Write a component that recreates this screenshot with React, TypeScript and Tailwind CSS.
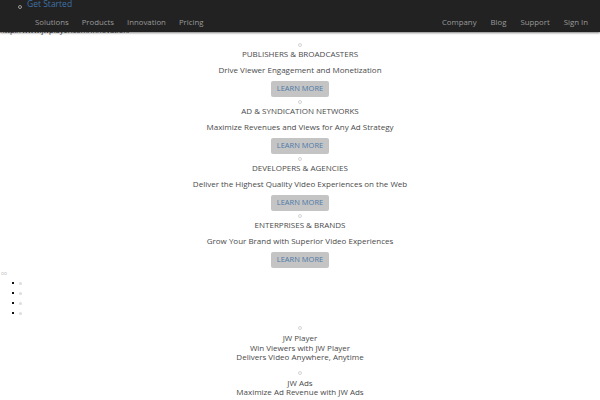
import React from 'react';

const sections = [
  { title: 'PUBLISHERS & BROADCASTERS', text: 'Drive Viewer Engagement and Monetization' },
  { title: 'AD & SYNDICATION NETWORKS', text: 'Maximize Revenues and Views for Any Ad Strategy' },
  { title: 'DEVELOPERS & AGENCIES', text: 'Deliver the Highest Quality Video Experiences on the Web' },
  { title: 'ENTERPRISES & BRANDS', text: 'Grow Your Brand with Superior Video Experiences' },
];

const products = [
  { name: 'JW Player', lines: ['Win Viewers with JW Player', 'Delivers Video Anywhere, Anytime'] },
  { name: 'JW Ads', lines: ['Maximize Ad Revenue with JW Ads', 'Monetize Every View Across Every Screen'] },
];

function Ring() {
  return <span className="block w-[4px] h-[4px] rounded-full border border-[#d4d4d4]" />;
}

export default function App() {
  return (
    <div className="w-[600px] h-[400px] overflow-hidden bg-white text-[#4a4a4a] font-['Open_Sans',sans-serif]">
      {/* Top bar */}
      <div className="relative z-10 h-[34px] bg-[#222] shadow-[0_1px_2px_rgba(0,0,0,0.5)]">
        <div className="flex items-center h-[12px] -mt-[2px] pl-[18px] gap-[5px]">
          <span className="w-[4px] h-[4px] mt-[5px] rounded-full border border-[#999]" />
          <span className="text-[8.5px] text-[#3f72a8]">Get Started</span>
        </div>
        <div className="flex justify-between items-center h-[20px] mt-[3px] pl-[35px] pr-[12px] text-[7.8px] text-[#9a9a9a]">
          <div className="flex gap-[13px]">
            <span>Solutions</span>
            <span>Products</span>
            <span>Innovation</span>
            <span>Pricing</span>
          </div>
          <div className="flex gap-[14px]">
            <span>Company</span>
            <span>Blog</span>
            <span>Support</span>
            <span>Sign In</span>
          </div>
        </div>
      </div>
      <div className="-mt-[6px] h-[8px] leading-[8px] text-[7.5px] text-[#333]">http://www.jwplayer.com/innovation/</div>

      {/* Audiences */}
      <div className="mt-[8px] flex flex-col items-center text-[8px]">
        {sections.map((s) => (
          <div key={s.title} className="flex flex-col items-center">
            <div className="h-[6px] flex items-center"><Ring /></div>
            <div className="h-[10px] leading-[10px] mt-[1px]">{s.title}</div>
            <div className="h-[10px] leading-[10px] mt-[6px]">{s.text}</div>
            <button className="mt-[6px] mb-[2px] h-[16px] px-[6px] bg-[#c4c4c4] rounded-[2px] text-[7.5px] text-[#4d7aa8]">LEARN MORE</button>
          </div>
        ))}
      </div>

      <div className="text-[5px] leading-[6px] text-[#bbb] pl-[1px]">oo</div>
      <ul className="mt-[2px] pl-[12px]">
        {[0, 1, 2, 3].map((i) => (
          <li key={i} className="flex items-center h-[10px] gap-[5px]">
            <span className="w-[2px] h-[2px] bg-[#111]" />
            <span className="w-[3px] h-[3px] rounded-full bg-[#ddd]" />
          </li>
        ))}
      </ul>

      {/* Products */}
      <div className="mt-[7px] flex flex-col items-center text-[8px] leading-[9.5px]">
        {products.map((p) => (
          <div key={p.name} className="flex flex-col items-center mb-[8px]">
            <div className="h-[6px] flex items-center"><Ring /></div>
            <div className="mt-[2px]">{p.name}</div>
            {p.lines.map((l) => (
              <div key={l}>{l}</div>
            ))}
          </div>
        ))}
      </div>
    </div>
  );
}
